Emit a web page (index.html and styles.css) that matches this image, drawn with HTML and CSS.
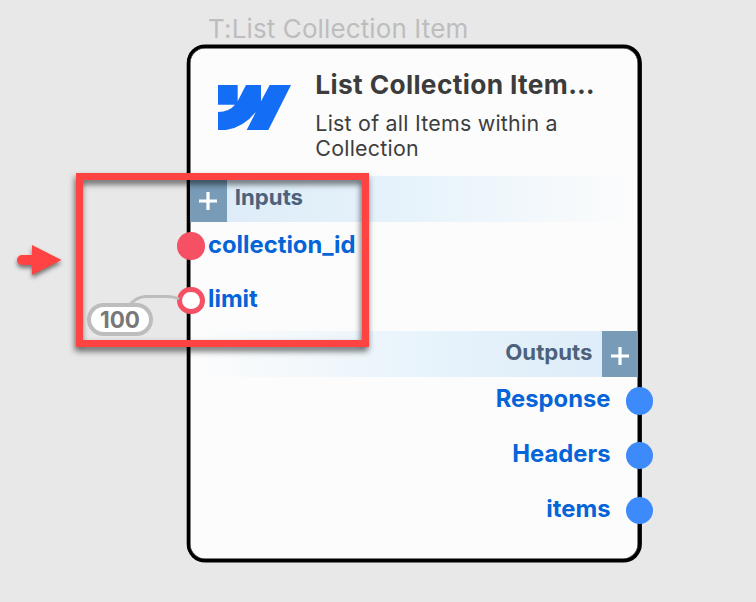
FILE: index.html
```html
<!DOCTYPE html>
<html lang="en">
<head>
<meta charset="utf-8">
<title>List Collection Item</title>
<link rel="stylesheet" href="styles.css">
</head>
<body>
<main class="canvas">
  <div class="node-label">T:List Collection Item</div>
  <article class="node">
    <header class="node-header">
      <svg class="logo" viewBox="114 224 219 137" preserveAspectRatio="none" aria-hidden="true"><path d="M114 224H173V273L198 224H243V273L269 224H333L264 361H199L228 304Q184 360 114 361V305Q148 304 165 283H114Z"/></svg>
      <div class="heading">
        <h1 class="title">List Collection Item…</h1>
        <p class="description">List of all Items within a Collection</p>
      </div>
    </header>
    <section class="inputs">
      <div class="bar bar-inputs">
        <button class="add" aria-label="Add input"><svg class="plus" viewBox="0 0 18 18"><path d="M9 0V18M0 9H18"/></svg></button>
        <span class="bar-text inputs-text">Inputs</span>
      </div>
      <div class="port"><i class="dot dot-required"></i><span class="name">collection_id</span></div>
      <div class="port"><i class="dot dot-linked"></i><span class="name limit">limit</span></div>
    </section>
    <section class="outputs">
      <div class="bar bar-outputs">
        <span class="bar-text outputs-text">Outputs</span>
        <button class="add" aria-label="Add output"><svg class="plus" viewBox="0 0 18 18"><path d="M9 0V18M0 9H18"/></svg></button>
      </div>
      <div class="port port-out"><span class="name">Response</span><i class="dot dot-out"></i></div>
      <div class="port port-out"><span class="name">Headers</span><i class="dot dot-out"></i></div>
      <div class="port port-out"><span class="name items">items</span><i class="dot dot-out"></i></div>
    </section>
  </article>
  <svg class="wire" viewBox="0 0 54 18" aria-hidden="true"><path d="M3 15Q10 5.500 20 5.500H42Q48 5.500 53 8"/></svg>
  <div class="value">100</div>
  <div class="highlight"></div>
  <svg class="arrow" viewBox="0 0 60 45" aria-hidden="true"><path d="M12 15H22V5L51.500 20L22 35V25H12A5 5 0 0 1 12 15Z"/></svg>
</main>
</body>
</html>
```
FILE: styles.css
```css
* { box-sizing: border-box; }
body { margin: 0; font-family: Inter, sans-serif; }
.canvas { position: relative; width: 756px; height: 602px; overflow: hidden; background: #e8e8e8; }
.node-label { position: absolute; left: 208px; top: 12px; font-size: 26px; line-height: 34px; letter-spacing: .12px; color: #bdbdbd; white-space: nowrap; }
.node { position: absolute; left: 187px; top: 45px; width: 454px; height: 517px; border: 3px solid #000; border-radius: 18px; background: #fcfcfc; box-shadow: .3px 0 0 .6px #000, inset 0 0 0 .5px #000; }
.node-header { display: flex; height: 128px; padding: 20px 0 0 28px; }
.logo { width: 73px; height: 45.700px; margin-top: 16.500px; fill: #146ef5; }
.heading { width: 300px; margin-left: 24.300px; }
.title { margin: 0; font-size: 26.300px; line-height: 33px; font-weight: 700; letter-spacing: .35px; color: #3c3c3c; white-space: nowrap; }
.description { width: 260px; margin: 10px 0 0; font-size: 21.400px; line-height: 25px; letter-spacing: .24px; color: #3e3e3e; }
.inputs { height: 155px; }
.bar { display: flex; height: 45.500px; }
.bar-inputs { background: linear-gradient(90deg, #dbebf8, #e7f3fb 50%, #fcfcfc); }
.bar-outputs { justify-content: flex-end; margin-left: 1px; background: linear-gradient(90deg, #fcfcfc, #e7f3fb 55%, #dbebf8); }
.bar-inputs { margin-right: 1px; }
.add { display: flex; align-items: center; justify-content: center; width: 36.500px; padding: 4px 0 0; border: 0; background: #789bb7; }
.plus { width: 18px; height: 18px; fill: none; stroke: #fff; stroke-width: 3.200; }
.bar-text { font-size: 22.200px; line-height: 42px; font-weight: 700; color: #4c627c; }
.inputs-text { margin-left: 8.300px; }
.outputs-text { margin-right: 9px; }
.port { display: flex; align-items: center; height: 54.800px; margin-left: -13px; }
.port:nth-child(2) { margin-top: -3px; }
.port-out { justify-content: flex-end; margin: 0 -15px 0 0; }
.port-out:nth-child(2) { margin-top: -3px; }
.name { margin: -2px 0 0 3.500px; font-size: 23.800px; line-height: 30px; font-weight: 700; color: #0564d8; }
.limit { margin-top: -4px; }
.port-out .name { margin: -4px 15px 0 0; }
.port-out .items { margin-top: -2.500px; }
.dot { width: 27.500px; height: 27.500px; border-radius: 50%; }
.dot-required { background: #f55064; }
.dot-linked { border: 5.500px solid #f55064; background: #fff; }
.dot-out { background: #3d8bfa; }
.wire { position: absolute; left: 126px; top: 291px; width: 54px; height: 18px; fill: none; stroke: #bdbdbd; stroke-width: 3; }
.value { position: absolute; left: 87px; top: 303px; width: 66px; height: 33px; border: 4px solid #bdbdbd; border-radius: 17px; background: #fff; color: #787878; font-size: 22.500px; line-height: 25px; font-weight: 700; text-align: center; }
.highlight { position: absolute; left: 76px; top: 173px; width: 293px; height: 174px; border: 7px solid #ff4242; filter: drop-shadow(-1px 4px 3px rgba(0, 0, 0, .6)); }
.arrow { position: absolute; left: 10px; top: 240px; width: 60px; height: 45px; fill: #ff4242; filter: drop-shadow(0 3px 2px rgba(0, 0, 0, .5)); }
```
